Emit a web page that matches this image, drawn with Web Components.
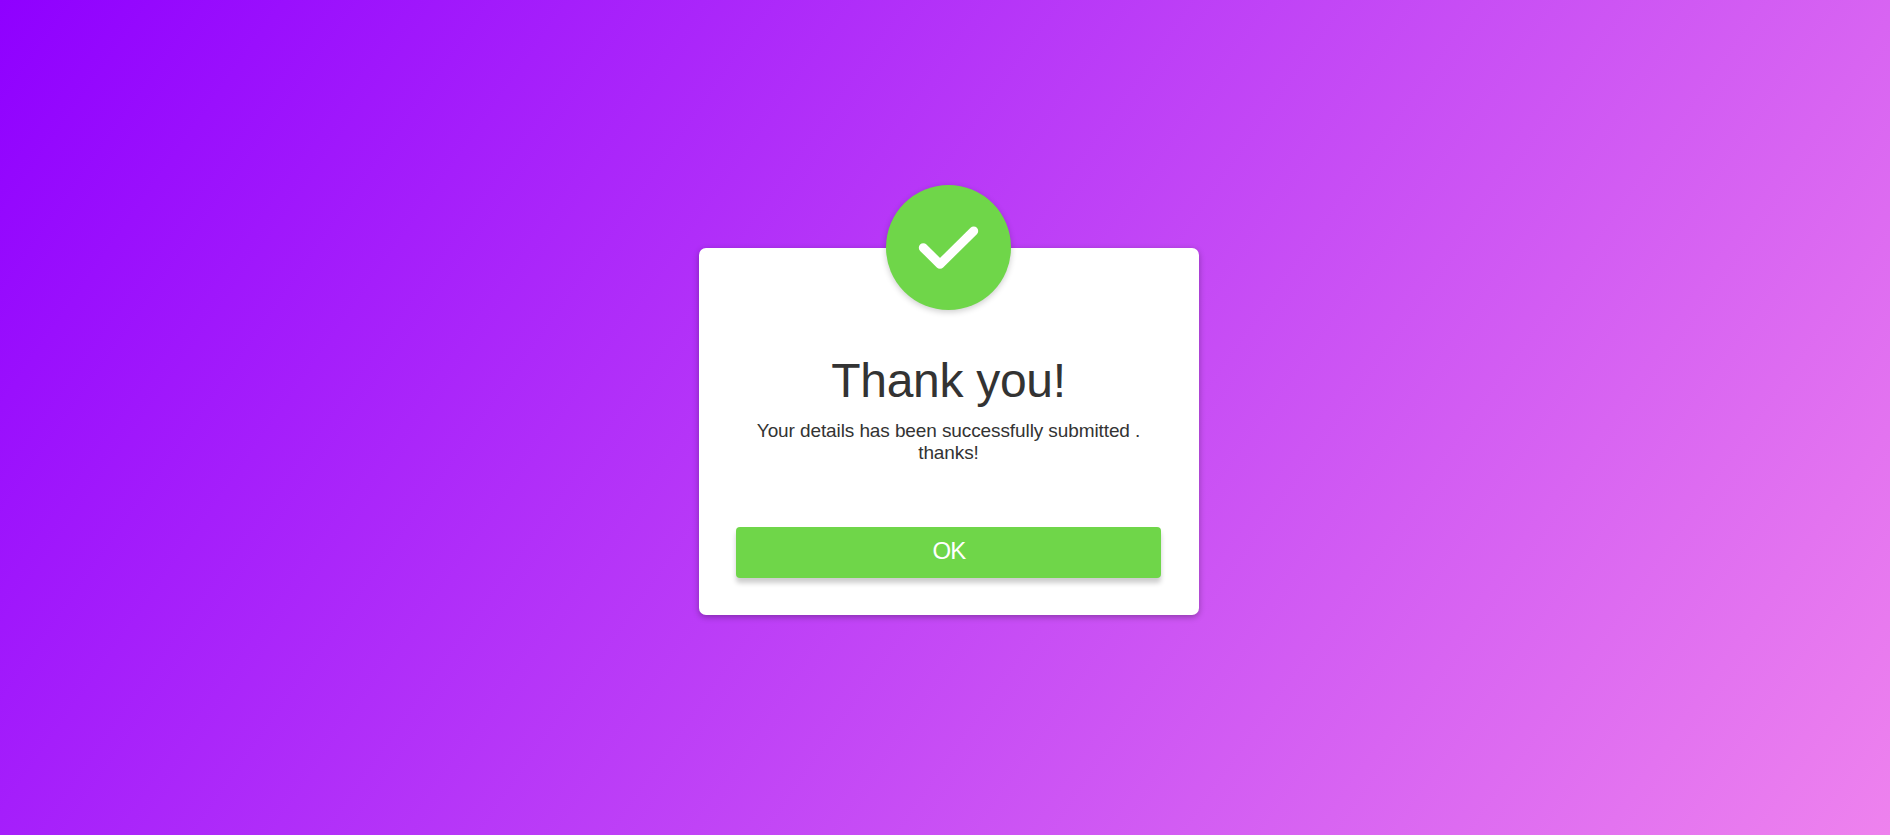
<!DOCTYPE html>
<html lang="en"><head><meta charset="utf-8"><title>Thank you</title>
<style>
html,body{height:100%;margin:0}
body{font-family:"Liberation Sans",Arial,sans-serif;overflow:hidden}
</style></head><body>
<popup-page><popup-card><check-badge slot="badge"></check-badge><span slot="title">Thank you!</span><span slot="text">Your details has been successfully submitted . thanks!</span><popup-button slot="action">OK</popup-button></popup-card></popup-page>
<script>
const define=(name,html)=>customElements.define(name,class extends HTMLElement{
  constructor(){super();this.attachShadow({mode:'open'}).innerHTML=html}
});
define('popup-page',`<style>
:host{display:flex;box-sizing:border-box;height:100vh;justify-content:center;align-items:flex-start;padding-top:248px;padding-left:8px;background:linear-gradient(125deg,#8f00ff,#ee82ee)}
</style><slot></slot>`);
define('popup-card',`<style>
:host{display:flex;flex-direction:column;align-items:center;box-sizing:border-box;width:500px;height:367px;padding:0 38px 0 37px;background:#fff;border-radius:7px;text-align:center;color:#333;box-shadow:0 2px 6px rgba(0,0,0,.3)}
::slotted(check-badge){margin-top:-63px}
h2{font-size:48px;letter-spacing:-.3px;font-weight:400;line-height:58px;margin:42px 0 0}
p{font-size:19px;letter-spacing:-.1px;line-height:22px;margin:10px 0 0;padding:0 15px}
::slotted(popup-button){margin-top:63px;align-self:stretch}
</style><slot name="badge"></slot><h2><slot name="title"></slot></h2><p><slot name="text"></slot></p><slot name="action"></slot>`);
define('check-badge',`<style>
:host{display:block;width:125px;height:125px;border-radius:50%;background:#6fd649;box-shadow:0 2px 6px rgba(0,0,0,.2)}
svg{display:block}
</style><svg width="125" height="125" viewBox="0 0 125 125"><path d="M37.300 62.700L54 79.300L87.700 46" fill="none" stroke="#fff" stroke-width="9" stroke-linecap="round" stroke-linejoin="round"/></svg>`);
define('popup-button',`<style>
:host{display:block}
button{display:block;width:100%;height:51px;padding:0 0 3px 1px;border:0;border-radius:4px;background:#6fd649;color:#fff;font:24px "Liberation Sans",Arial,sans-serif;letter-spacing:-.9px;box-shadow:0 5px 5px rgba(0,0,0,.2)}
</style><button><slot></slot></button>`);
</script></body></html>
